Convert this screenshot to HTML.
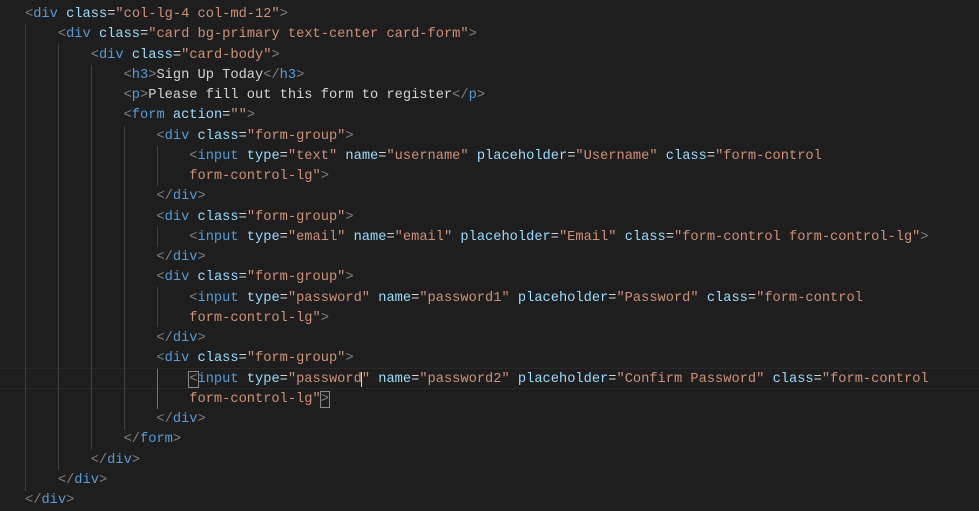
<!DOCTYPE html>
<html><head><meta charset="utf-8"><style>
body{margin:0;background:#1e1e1e;width:979px;height:510px;overflow:hidden;position:relative}
#c{position:absolute;top:5px;left:0;font-family:"Liberation Mono",monospace;font-size:13.7px;line-height:20.25px;color:#d4d4d4}
.l{height:20.25px;padding-left:25px;white-space:pre}
.t{color:#569cd6}.b{color:#808080}.a{color:#9cdcfe}.s{color:#ce9178}
.g{position:absolute;width:1px;background:#404040}
.hl{position:absolute;left:0;right:0;top:368px;height:19px;border-top:1px solid #282828;border-bottom:1px solid #282828}
.br{outline:1px solid #888;}
</style></head><body>
<div class="hl"></div>
<div class="g" style="left:25px;top:24px;height:467px"></div>
<div class="g" style="left:58px;top:44px;height:426px"></div>
<div class="g" style="left:91px;top:65px;height:385px"></div>
<div class="g" style="left:124px;top:126px;height:304px"></div>
<div class="g" style="left:157px;top:146px;height:40px"></div>
<div class="g" style="left:157px;top:227px;height:20px"></div>
<div class="g" style="left:157px;top:287px;height:40px"></div>
<div class="g" style="left:157px;top:369px;height:40px;background:#707070"></div>
<div id="c"><div class="l"><span class="b">&lt;</span><span class="t">div</span> <span class="a">class</span>=<span class="s">"col-lg-4 col-md-12"</span><span class="b">&gt;</span></div><div class="l">    <span class="b">&lt;</span><span class="t">div</span> <span class="a">class</span>=<span class="s">"card bg-primary text-center card-form"</span><span class="b">&gt;</span></div><div class="l">        <span class="b">&lt;</span><span class="t">div</span> <span class="a">class</span>=<span class="s">"card-body"</span><span class="b">&gt;</span></div><div class="l">            <span class="b">&lt;</span><span class="t">h3</span><span class="b">&gt;</span>Sign Up Today<span class="b">&lt;/</span><span class="t">h3</span><span class="b">&gt;</span></div><div class="l">            <span class="b">&lt;</span><span class="t">p</span><span class="b">&gt;</span>Please fill out this form to register<span class="b">&lt;/</span><span class="t">p</span><span class="b">&gt;</span></div><div class="l">            <span class="b">&lt;</span><span class="t">form</span> <span class="a">action</span>=<span class="s">""</span><span class="b">&gt;</span></div><div class="l">                <span class="b">&lt;</span><span class="t">div</span> <span class="a">class</span>=<span class="s">"form-group"</span><span class="b">&gt;</span></div><div class="l">                    <span class="b">&lt;</span><span class="t">input</span> <span class="a">type</span>=<span class="s">"text"</span> <span class="a">name</span>=<span class="s">"username"</span> <span class="a">placeholder</span>=<span class="s">"Username"</span> <span class="a">class</span>=<span class="s">"form-control</span></div><div class="l">                    <span class="s">form-control-lg"</span><span class="b">&gt;</span></div><div class="l">                <span class="b">&lt;/</span><span class="t">div</span><span class="b">&gt;</span></div><div class="l">                <span class="b">&lt;</span><span class="t">div</span> <span class="a">class</span>=<span class="s">"form-group"</span><span class="b">&gt;</span></div><div class="l">                    <span class="b">&lt;</span><span class="t">input</span> <span class="a">type</span>=<span class="s">"email"</span> <span class="a">name</span>=<span class="s">"email"</span> <span class="a">placeholder</span>=<span class="s">"Email"</span> <span class="a">class</span>=<span class="s">"form-control form-control-lg"</span><span class="b">&gt;</span></div><div class="l">                <span class="b">&lt;/</span><span class="t">div</span><span class="b">&gt;</span></div><div class="l">                <span class="b">&lt;</span><span class="t">div</span> <span class="a">class</span>=<span class="s">"form-group"</span><span class="b">&gt;</span></div><div class="l">                    <span class="b">&lt;</span><span class="t">input</span> <span class="a">type</span>=<span class="s">"password"</span> <span class="a">name</span>=<span class="s">"password1"</span> <span class="a">placeholder</span>=<span class="s">"Password"</span> <span class="a">class</span>=<span class="s">"form-control</span></div><div class="l">                    <span class="s">form-control-lg"</span><span class="b">&gt;</span></div><div class="l">                <span class="b">&lt;/</span><span class="t">div</span><span class="b">&gt;</span></div><div class="l">                <span class="b">&lt;</span><span class="t">div</span> <span class="a">class</span>=<span class="s">"form-group"</span><span class="b">&gt;</span></div><div class="l">                    <span class="b br">&lt;</span><span class="t">input</span> <span class="a">type</span>=<span class="s">"password</span><span style="border-left:1px solid #ddd;margin-left:-1px"></span><span class="s">"</span> <span class="a">name</span>=<span class="s">"password2"</span> <span class="a">placeholder</span>=<span class="s">"Confirm Password"</span> <span class="a">class</span>=<span class="s">"form-control</span></div><div class="l">                    <span class="s">form-control-lg"</span><span class="b br">&gt;</span></div><div class="l">                <span class="b">&lt;/</span><span class="t">div</span><span class="b">&gt;</span></div><div class="l">            <span class="b">&lt;/</span><span class="t">form</span><span class="b">&gt;</span></div><div class="l">        <span class="b">&lt;/</span><span class="t">div</span><span class="b">&gt;</span></div><div class="l">    <span class="b">&lt;/</span><span class="t">div</span><span class="b">&gt;</span></div><div class="l"><span class="b">&lt;/</span><span class="t">div</span><span class="b">&gt;</span></div></div>
</body></html>
